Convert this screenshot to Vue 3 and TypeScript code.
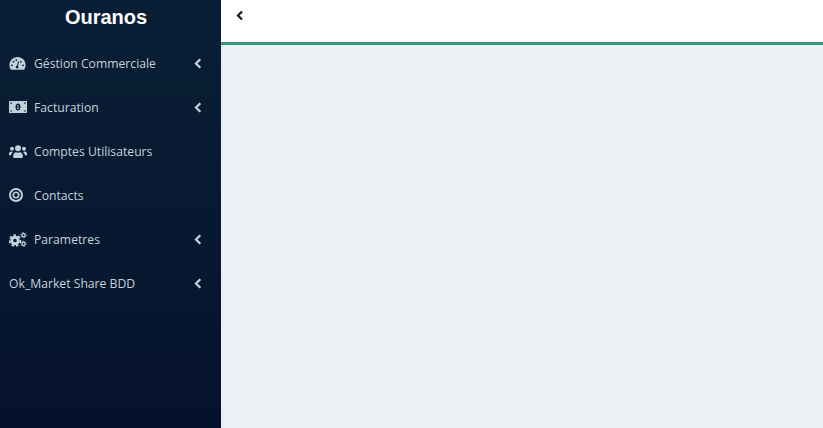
<script setup lang="ts">
interface MenuItem {
  label: string;
  icon?: string;
  sub: boolean;
}

const items: MenuItem[] = [
  { label: "Géstion Commerciale", icon: "gauge", sub: true },
  { label: "Facturation", icon: "bill", sub: true },
  { label: "Comptes Utilisateurs", icon: "users", sub: false },
  { label: "Contacts", icon: "target", sub: false },
  { label: "Parametres", icon: "cogs", sub: true },
  { label: "Ok_Market Share BDD", sub: true },
];
</script>

<template>
  <div class="layout">
    <aside class="sidebar">
      <div class="brand">Ouranos</div>
      <nav class="menu">
        <a v-for="item in items" :key="item.label" class="item">
          <span v-if="item.icon" class="icon">
            <svg v-if="item.icon === 'gauge'" width="17" height="15" viewBox="0 0 17 15">
              <path fill-rule="evenodd" d="M8.5 1C4 1 .4 4.600.4 9.100c0 1.600.4 3 1.100 4.200.2.300.4.400.7.400h12.600c.3 0 .5-.1.700-.4.700-1.200 1.100-2.600 1.100-4.200C16.600 4.600 13 1 8.500 1ZM3 10.200a.9.9 0 1 1 0-1.800.9.9 0 0 1 0 1.800Zm1.500-3.700a.9.9 0 1 1 0-1.800.9.900 0 0 1 0 1.800Zm2.800-1.500a.9.900 0 1 1 0-1.800.9.900 0 0 1 0 1.800Zm2.100 7a1.500 1.500 0 0 1-2.500-1.400c.2-.5.500-.8 1-.9l1.200-4.500 1 .3-1.200 4.500c.5.500.7 1.300.5 2Zm2.500-5.300a.9.900 0 1 1 0-1.800.9.900 0 0 1 0 1.800Zm2.100 3.500a.9.900 0 1 1 0-1.800.9.900 0 0 1 0 1.800Z" />
            </svg>
            <svg v-else-if="item.icon === 'bill'" width="18" height="12" viewBox="0 0 18 12">
              <path fill-rule="evenodd" d="M.5 0h17c.3 0 .5.2.5.5v11c0 .3-.2.5-.5.5H.5a.5.5 0 0 1-.5-.5V.5C0 .2.2 0 .5 0Zm1 1.500v1.600a1.600 1.600 0 0 0 1.600-1.600H1.500Zm0 7.400v1.600h1.600a1.600 1.600 0 0 0-1.600-1.600Zm15-5.800V1.500h-1.600a1.600 1.600 0 0 0 1.600 1.600Zm0 7.400V8.900a1.600 1.600 0 0 0-1.600 1.600h1.600ZM9 2.600C7.600 2.600 6.500 4.100 6.500 6S7.600 9.400 9 9.400 11.500 7.900 11.500 6 10.400 2.600 9 2.600Zm-.9 1.700h1.300v2.900h.6V8H8v-.8h.6V5.300h-.5v-1Z" />
            </svg>
            <svg v-else-if="item.icon === 'users'" width="18" height="13" viewBox="0 0 18 13">
              <circle cx="9" cy="3.300" r="3" />
              <circle cx="3" cy="3.800" r="2" />
              <circle cx="15" cy="3.800" r="2" />
              <path d="M5 13c-.5 0-.8-.3-.8-.8v-1.300C4.200 8.600 5.800 7.300 7 7.300c.6 0 1.200.4 2 .4s1.400-.4 2-.4c1.200 0 2.800 1.300 2.800 3.600v1.300c0 .5-.3.800-.8.800H5ZM0 10.200V8.800C0 7.400 1 6.500 2.200 6.500c.7 0 1.300.2 1.800.6-1.100.8-1.800 2-1.900 3.100H0Zm18 0V8.800c0-1.400-1-2.300-2.200-2.300-.7 0-1.300.2-1.800.6 1.100.8 1.800 2 1.900 3.100H18Z" />
            </svg>
            <svg v-else-if="item.icon === 'target'" width="14" height="14" viewBox="0 0 14 14">
              <circle cx="7" cy="7" r="6" fill="none" stroke="currentColor" stroke-width="2" />
              <circle cx="7" cy="7" r="2.700" fill="none" stroke="currentColor" stroke-width="1.600" />
            </svg>
            <svg v-else class="cogs" width="18" height="15" viewBox="0 0 18 15">
              <circle cx="6" cy="8.500" r="3.300" stroke-width="3" />
              <circle cx="6" cy="8.500" r="5.400" stroke-width="1.800" stroke-dasharray="2.500 2.150" />
              <circle cx="14.500" cy="3.200" r="1.600" stroke-width="1.300" />
              <circle cx="14.500" cy="3.200" r="2.700" stroke-width="1" stroke-dasharray="1.300 1.530" />
              <circle cx="14.500" cy="11.800" r="1.600" stroke-width="1.300" />
              <circle cx="14.500" cy="11.800" r="2.700" stroke-width="1" stroke-dasharray="1.300 1.530" />
            </svg>
          </span>
          <span class="label">{{ item.label }}</span>
          <svg v-if="item.sub" class="chev" width="8" height="11" viewBox="0 0 8 11">
            <path d="M6.300 1.200 2 5.500l4.300 4.300" fill="none" stroke="currentColor" stroke-width="2.300" />
          </svg>
        </a>
      </nav>
    </aside>
    <main class="content">
      <header class="topbar">
        <svg class="back" width="8" height="11" viewBox="0 0 8 11">
          <path d="M6 1.500 2 5.500l4 4" fill="none" stroke="currentColor" stroke-width="2.200" />
        </svg>
      </header>
    </main>
  </div>
</template>

<style>
html, body {
  margin: 0;
  height: 100%;
  overflow: hidden;
}
</style>

<style scoped>
.layout {
  display: flex;
  width: 823px;
  height: 428px;
  font-family: "Open Sans", "Noto Sans", sans-serif;
}

.sidebar {
  width: 221px;
  flex: none;
  background: linear-gradient(180deg, #091e34 0%, #071930 55%, #06122c 100%);
}

.brand {
  height: 34px;
  line-height: 34px;
  text-align: center;
  padding-right: 9px;
  color: #fff;
  font-family: "Liberation Sans", Arial, sans-serif;
  font-size: 20px;
  font-weight: 700;
}

.menu {
  display: flex;
  flex-direction: column;
  padding-top: 7px;
}

.item {
  display: flex;
  align-items: center;
  height: 44px;
  padding-left: 9px;
  padding-right: 19px;
  font-size: 12.2px;
  color: #c3d3dc;
}

.icon {
  width: 25px;
  flex: none;
  display: flex;
  align-items: center;
  color: #bfd2dc;
}

.icon svg {
  fill: currentColor;
  display: block;
}

.icon svg.cogs {
  fill: none;
  stroke: currentColor;
}

.label {
  flex: 1;
}

.chev {
  flex: none;
  color: #bfd2dc;
}

.content {
  flex: 1;
  background: #ecf0f5;
}

.topbar {
  box-sizing: border-box;
  height: 45px;
  background: #fff;
  border-bottom: 3px solid #329a7e;
  padding: 10px 0 0 15px;
  color: #14182e;
}

.back {
  display: block;
}
</style>
